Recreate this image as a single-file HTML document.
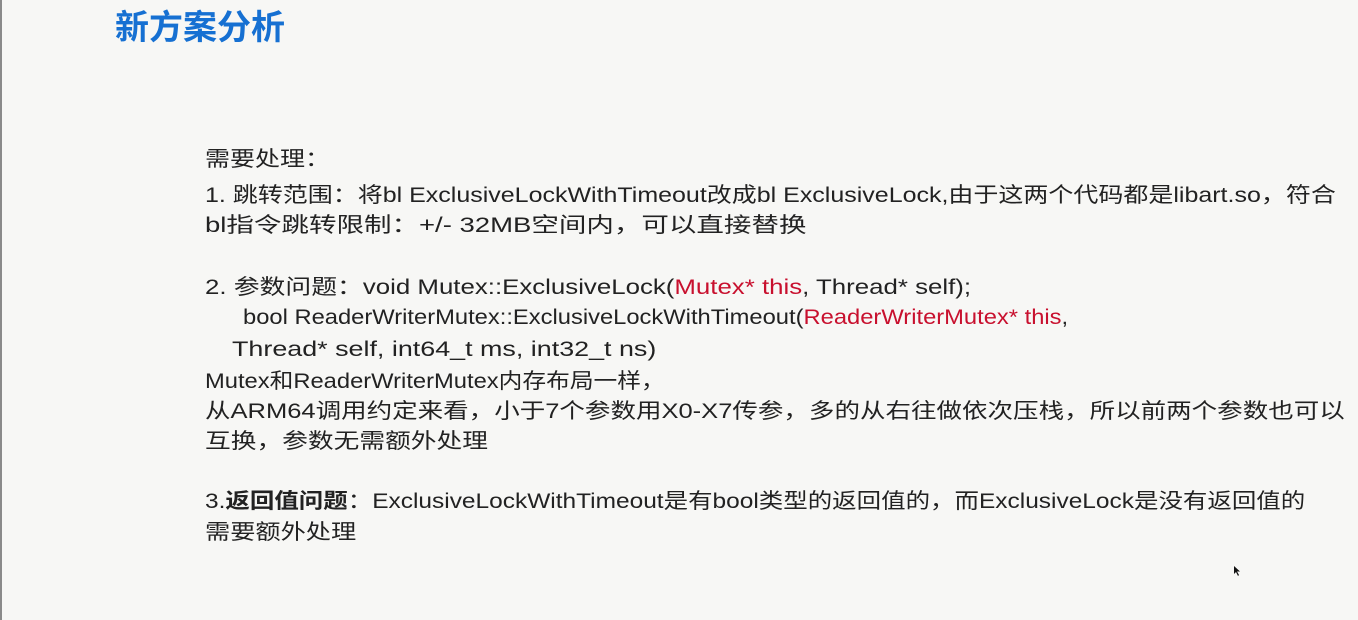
<!DOCTYPE html>
<html><head><meta charset="utf-8"><style>
body{margin:0;width:1358px;height:620px;background:#f7f7f5;overflow:hidden;position:relative;font-family:"Liberation Sans","Noto Sans CJK SC",sans-serif;color:#222;}
.l{position:absolute;left:205px;font-size:21px;white-space:nowrap;line-height:30px;transform-origin:0 50%;}
.r{color:#c8102e;}
#t{position:absolute;left:115px;top:0px;font-size:34px;font-weight:bold;color:#1670d2;font-family:"Noto Sans CJK SC",sans-serif;}
#bar{position:absolute;left:0;top:0;width:2px;height:620px;background:#8a8a8a;}
</style></head><body>
<div id="bar"></div>
<div id="t">新方案分析</div>
<div class="l" style="top:145px;transform:scaleX(1.19)">需要处理：</div>
<div class="l" style="top:181px;transform:scaleX(1.19)">1. 跳转范围：将bl ExclusiveLockWithTimeout改成bl ExclusiveLock,由于这两个代码都是libart.so，符合</div>
<div class="l" style="top:211px;transform:scaleX(1.31)">bl指令跳转限制：+/- 32MB空间内，可以直接替换</div>
<div class="l" style="top:273px;transform:scaleX(1.23)">2. 参数问题：void Mutex::ExclusiveLock(<span class="r">Mutex* this</span>, Thread* self);</div>
<div class="l" style="top:303px;left:243px;transform:scaleX(1.13)">bool ReaderWriterMutex::ExclusiveLockWithTimeout(<span class="r">ReaderWriterMutex* this</span>,</div>
<div class="l" style="top:335px;left:232px;transform:scaleX(1.28)">Thread* self, int64_t ms, int32_t ns)</div>
<div class="l" style="top:367px;transform:scaleX(1.13)">Mutex和ReaderWriterMutex内存布局一样，</div>
<div class="l" style="top:397px;transform:scaleX(1.215)">从ARM64调用约定来看，小于7个参数用X0-X7传参，多的从右往做依次压栈，所以前两个参数也可以</div>
<div class="l" style="top:427px;transform:scaleX(1.225)">互换，参数无需额外处理</div>
<div class="l" style="top:487px;transform:scaleX(1.165)">3.<b>返回值问题</b>：ExclusiveLockWithTimeout是有bool类型的返回值的，而ExclusiveLock是没有返回值的</div>
<div class="l" style="top:518px;transform:scaleX(1.2)">需要额外处理</div>
<svg style="position:absolute;left:1233px;top:565px" width="8" height="12" viewBox="0 0 8 12"><path d="M1 1 L1 9 L3 7 L5 11 L6 10 L4 6.5 L7 6.5 Z" fill="#111"/></svg>
</body></html>
